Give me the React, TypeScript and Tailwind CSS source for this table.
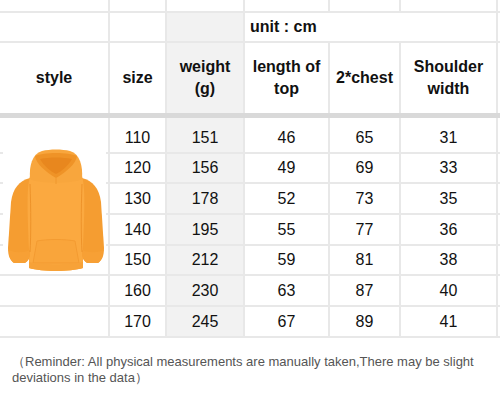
import React from "react";

const data = [
  ["110", "151", "46", "65", "31"],
  ["120", "156", "49", "69", "33"],
  ["130", "178", "52", "73", "35"],
  ["140", "195", "55", "77", "36"],
  ["150", "212", "59", "81", "38"],
  ["160", "230", "63", "87", "40"],
  ["170", "245", "67", "89", "41"],
];

const rowH = ["h-[31px]", "h-[30px]", "h-[31px]", "h-[31px]", "h-[30px]", "h-[31px]", "h-[31px]"];

const line = "border-[#e8e8e8]";

function Hoodie() {
  return (
    <svg width="103" height="129" viewBox="3 4 103 129">
      {/* sleeves */}
      <path d="M30 38 C19 41 13 48 11 62 L8 108 C8 116 10 120 14 123 L25 123 C29 120 31 116 31 110 Z" fill="#f59d31" />
      <path d="M82 38 C93 41 99 48 101 62 L104 108 C104 116 102 120 98 123 L87 123 C83 120 81 116 81 110 Z" fill="#f59d31" />
      {/* body */}
      <path d="M30 36 C38 33 74 33 82 36 C86 50 84 80 83 110 L83 128 C70 132 42 132 29 128 L29 110 C28 80 26 50 30 36 Z" fill="#fba940" />
      {/* cuffs */}
      <path d="M9 110 C14 113 24 113 30 110 L30 116 C28 121 26 123 24 123 L14 123 C11 121 9 118 9 110 Z" fill="#f7a035" />
      <path d="M103 110 C98 113 88 113 82 110 L82 116 C84 121 86 123 88 123 L98 123 C101 121 103 118 103 110 Z" fill="#f7a035" />
      {/* sleeve seams */}
      <path d="M30 44 C31 70 31 95 30 112" stroke="#ee932a" strokeWidth="1" fill="none" />
      <path d="M82 44 C81 70 81 95 82 112" stroke="#ee932a" strokeWidth="1" fill="none" />
      {/* pocket */}
      <path d="M37 101 C47 99 65 99 75 101 L79 123 L33 123 Z" fill="#f9a53b" stroke="#f1982e" strokeWidth="0.8" />
      {/* hem */}
      <path d="M29 122 C42 125 70 125 83 122 L83 128 C70 132 42 132 29 128 Z" fill="#f7a238" />
      {/* hood */}
      <path d="M30 39 C29 26 32 14 42 11 C50 9 62 9 70 11 C80 14 83 26 82 39 C74 44 38 44 30 39 Z" fill="#f8a63d" />
      <path d="M35 16 C44 12 68 12 77 16 C76 24 66 32 56 38 C46 32 36 24 35 16 Z" fill="#ef9327" />
      <path d="M40 19 C50 17 62 17 72 19 C68 26 62 31 56 34 C50 31 44 26 40 19 Z" fill="#e8871e" />
      <path d="M56 38 L56 44" stroke="#ee942b" strokeWidth="0.8" />
    </svg>
  );
}

export default function App() {
  return (
    <div className="relative w-[500px] h-[402px] bg-white text-[#111] font-['Liberation_Sans',Arial,Helvetica,sans-serif] overflow-hidden">
      {/* top strip */}
      <div className={`flex h-[13px] border-b-2 ${line}`}>
        <div className={`w-[110px] border-r-2 ${line}`} />
        <div className={`w-[57px] border-r-2 ${line}`} />
        <div className={`w-[78px] border-r-2 ${line}`} />
        <div className={`w-[85px] border-r-2 ${line}`} />
        <div className={`w-[71px] border-r-2 ${line}`} />
        <div className={`w-[97px] border-r-2 ${line}`} />
      </div>
      {/* unit row */}
      <div className={`flex h-[30px] border-b-2 ${line}`}>
        <div className={`w-[110px] border-r-2 ${line}`} />
        <div className={`w-[57px] border-r-2 ${line}`} />
        <div className={`w-[78px] border-r-2 ${line} bg-[#f2f2f2]`} />
        <div className={`w-[253px] border-r-2 ${line} flex items-center pl-[5px] text-[16px] font-bold`}>unit : cm</div>
      </div>
      {/* header row */}
      <div className="flex h-[70px] text-[16px] font-bold leading-[22px] text-center">
        <div className={`w-[110px] border-r-2 ${line} flex items-center justify-center`}>style</div>
        <div className={`w-[57px] border-r-2 ${line} flex items-center justify-center`}>size</div>
        <div className={`w-[78px] border-r-2 ${line} bg-[#f2f2f2] flex items-center justify-center`}>weight<br />(g)</div>
        <div className={`w-[85px] border-r-2 ${line} flex items-center justify-center`}>length of<br />top</div>
        <div className={`w-[71px] border-r-2 ${line} flex items-center justify-center`}>2*chest</div>
        <div className={`w-[97px] border-r-2 ${line} flex items-center justify-center`}>Shoulder<br />width</div>
      </div>
      {/* band */}
      <div className="h-[5px] bg-[#d9d9d9]" />
      {/* gap */}
      <div className="flex h-[5px]">
        <div className={`w-[110px] border-r-2 ${line}`} />
        <div className={`w-[57px] border-r-2 ${line}`} />
        <div className={`w-[78px] border-r-2 ${line} bg-[#f2f2f2]`} />
        <div className={`w-[85px] border-r-2 ${line}`} />
        <div className={`w-[71px] border-r-2 ${line}`} />
        <div className={`w-[97px] border-r-2 ${line}`} />
      </div>
      {/* data rows */}
      {data.map((r, i) => (
        <div key={i} className={`flex ${rowH[i]} border-b-2 ${line} text-[16px] text-center`}>
          <div className={`w-[110px] border-r-2 ${line}`} />
          <div className={`w-[57px] border-r-2 ${line} flex items-center justify-center`}>{r[0]}</div>
          <div className={`w-[78px] border-r-2 ${line} bg-[#f2f2f2] flex items-center justify-center`}>{r[1]}</div>
          <div className={`w-[85px] border-r-2 ${line} flex items-center justify-center`}>{r[2]}</div>
          <div className={`w-[71px] border-r-2 ${line} flex items-center justify-center`}>{r[3]}</div>
          <div className={`w-[97px] border-r-2 ${line} flex items-center justify-center`}>{r[4]}</div>
        </div>
      ))}
      {/* footer */}
      <div className="pt-[16px] pl-[12px] pr-[8px] text-[13px] leading-[16px] text-[#555]">
        （Reminder: All physical measurements are manually taken,There may be slight deviations in the data）
      </div>
      {/* hoodie overlay */}
      <div className="absolute left-[3px] top-[144px] w-[103px] h-[129px] bg-white">
        <Hoodie />
      </div>
    </div>
  );
}
